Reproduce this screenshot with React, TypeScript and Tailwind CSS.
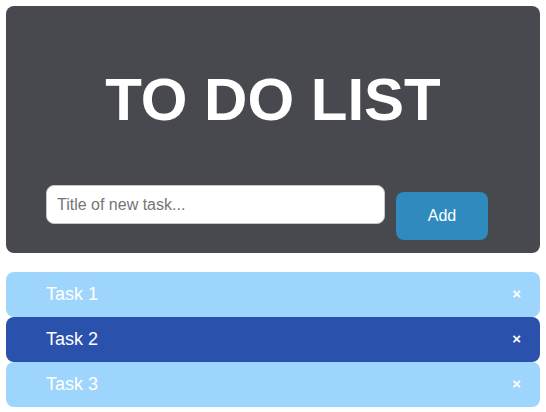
const tasks = [
  { title: "Task 1", active: false },
  { title: "Task 2", active: true },
  { title: "Task 3", active: false },
]

export default function App() {
  return (
    <div className="p-[6px] bg-white font-['Liberation_Sans',Arial,sans-serif]">
      <div className="bg-[#48494e] rounded-lg pt-[64px] pb-[13px] px-[40px]">
        <h1 className="text-[60px] leading-[60px] font-bold text-white text-center">TO DO LIST</h1>
        <div className="flex items-start mt-[55px]">
          <input
            type="text"
            placeholder="Title of new task..."
            className="w-[339px] h-[39px] bg-white rounded-lg border border-[#c8c8c8] px-[10px] text-[16px] text-[#333] placeholder:text-[#757575] outline-none"
          />
          <button className="ml-[11px] mt-[7px] w-[92px] h-[48px] bg-[#2f8abd] rounded-lg text-white text-[16px]">
            Add
          </button>
        </div>
      </div>

      <ul className="mt-[19px]">
        {tasks.map((t) => (
          <li
            key={t.title}
            className={
              "h-[45px] rounded-lg flex items-center justify-between pl-[40px] pr-[19px] text-white " +
              (t.active ? "bg-[#2a52ac]" : "bg-[#9ed5fc]")
            }
          >
            <span className="text-[18px]">{t.title}</span>
            <span className="text-[15px] font-bold">×</span>
          </li>
        ))}
      </ul>
    </div>
  )
}
